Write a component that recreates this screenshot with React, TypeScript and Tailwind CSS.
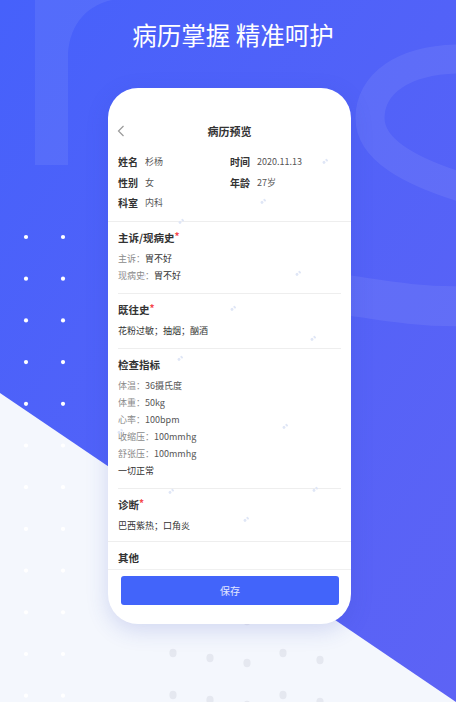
import React from 'react'

const info = [
  { label: '姓名', value: '杉杨' },
  { label: '时间', value: '2020.11.13' },
  { label: '性别', value: '女' },
  { label: '年龄', value: '27岁' },
  { label: '科室', value: '内科' },
]

const checks = [
  { label: '体温：', value: '36摄氏度' },
  { label: '体重：', value: '50kg' },
  { label: '心率：', value: '100bpm' },
  { label: '收缩压：', value: '100mmhg' },
  { label: '舒张压：', value: '100mmhg' },
]

// faint watermark marks inside the card, relative to the card box
const marks = [
  [214, 72], [152, 112], [70, 132], [32, 187], [187, 184], [122, 219], [202, 249],
  [69, 269], [174, 337], [9, 342], [60, 402], [135, 430], [204, 400],
]

const Backdrop: React.FC = () => {
  const rows = Array.from({ length: 12 }, (_, i) => 237 + i * 41.7)
  const grey = [
    [173, 611], [210, 616], [247, 621], [283, 611], [320, 618],
    [173, 653], [210, 658], [247, 663], [283, 653], [320, 660],
    [173, 695], [210, 700], [247, 705], [283, 695], [320, 702],
  ]
  return (
    <svg className="absolute inset-0" width="456" height="702" viewBox="0 0 456 702">
      <g fill="white" opacity="0.07">
        <path d="M35 165 L68 165 L68 58 C68 28 84 6 112 0 L168 0 L171 -6 L35 -6 Z" />
      </g>
      <g stroke="white" fill="none" opacity="0.07">
        <path d="M470 59 C400 57 370 86 370 118 C370 150 410 172 470 190" strokeWidth="29" />
        <path d="M320 291 C380 300 420 308 470 306" strokeWidth="40" />
      </g>
      <polygon points="0,393 456,702 0,702" fill="#f4f7fd" />
      {rows.map((y) => (
        <g key={y} fill="white">
          <circle cx="26" cy={y} r="2.1" />
          <circle cx="63" cy={y} r="2.1" />
        </g>
      ))}
      {grey.map(([x, y]) => (
        <ellipse key={`${x}-${y}`} cx={x} cy={y} rx="3.6" ry="4.2" fill="#e5e8f0" />
      ))}
    </svg>
  )
}

const Star = () => <span className="text-[#f5484c] text-[10px] align-top leading-[12px]">*</span>

const SectionTitle: React.FC<{ text: string; required?: boolean }> = ({ text, required }) => (
  <div className="h-[16px] text-[10.5px] leading-[16px] font-bold text-[#333]">
    {text}
    {required && <Star />}
  </div>
)

export default function App() {
  return (
    <div className="relative w-[456px] h-[702px] overflow-hidden bg-linear-to-br from-[#4661fb] to-[#5d63f5] font-['Noto_Sans_CJK_SC','Noto_Sans',sans-serif]">
      <Backdrop />

      <div className="relative flex flex-col">
        <h1 className="pt-[19px] pl-[10px] text-center text-[24.5px] leading-[32px] text-white">病历掌握 精准呵护</h1>

        <div className="relative mt-[37px] ml-[108px] w-[243px] h-[536px] rounded-[30px] bg-white shadow-[0_6px_22px_rgba(50,70,190,0.18)] overflow-hidden flex flex-col text-[9px]">
          {/* header */}
          <div className="pt-[33px] px-[9px] grid grid-cols-[1fr_auto_1fr] items-center h-[53px]">
            <svg width="8" height="12" viewBox="0 0 8 12" className="text-[#9a9a9a]">
              <polyline points="6.5,1 1.5,6 6.5,11" fill="none" stroke="currentColor" strokeWidth="1.2" />
            </svg>
            <div className="text-[11px] leading-[20px] font-bold text-[#333]">病历预览</div>
            <div />
          </div>

          {/* basic info */}
          <div className="mt-[11px] px-[10px] pb-[7px] border-b border-[#eeeeee] grid grid-cols-[112px_1fr]">
            {info.map((item) => (
              <div key={item.label} className="flex items-center gap-[7px] h-[20.5px]">
                <span className="text-[10px] leading-[14px] font-bold text-[#333]">{item.label}</span>
                <span className="text-[9px] leading-[14px] text-[#555]">{item.value}</span>
              </div>
            ))}
          </div>

          <div className="px-[10px]">
            <div className="pt-[8px] pb-[9px] border-b border-[#eeeeee]">
              <SectionTitle text="主诉/现病史" required />
              <div className="mt-[4px] text-[9px] leading-[17px]">
                <div className="h-[17px]"><span className="text-[#8a8a8a]">主诉：</span><span className="text-[#333]">胃不好</span></div>
                <div className="h-[17px]"><span className="text-[#8a8a8a]">现病史：</span><span className="text-[#333]">胃不好</span></div>
              </div>
            </div>

            <div className="pt-[8px] pb-[9px] border-b border-[#eeeeee]">
              <SectionTitle text="既往史" required />
              <div className="mt-[4px] h-[17px] text-[9px] leading-[17px] text-[#333]">花粉过敏；抽烟；酗酒</div>
            </div>

            <div className="pt-[8px] pb-[9px] border-b border-[#eeeeee]">
              <SectionTitle text="检查指标" />
              <div className="mt-[4px] text-[9px] leading-[17px]">
                {checks.map((c) => (
                  <div key={c.label} className="h-[17px]">
                    <span className="text-[#8a8a8a]">{c.label}</span>
                    <span className="text-[#555]">{c.value}</span>
                  </div>
                ))}
                <div className="h-[17px] text-[#333]">一切正常</div>
              </div>
            </div>
          </div>

          <div className="px-[10px] pt-[8px] pb-[7px] border-b border-[#eeeeee]">
            <SectionTitle text="诊断" required />
            <div className="mt-[4px] h-[17px] text-[9px] leading-[17px] text-[#333]">巴西紫热；口角炎</div>
          </div>

          <div className="px-[10px] pt-[8px] pb-[3px] border-b border-[#f0f0f0]">
            <SectionTitle text="其他" />
          </div>

          <button className="mt-[6px] ml-[13px] w-[218px] h-[29px] shrink-0 rounded-[3px] bg-[#4264fa] text-[10px] text-white/85 flex items-center justify-center">
            保存
          </button>

          {marks.map(([x, y]) => (
            <span
              key={`${x}-${y}`}
              className="absolute flex gap-[1px] -rotate-[40deg] pointer-events-none"
              style={{ left: x, top: y }}
            >
              <span className="w-[2.5px] h-[2.5px] rounded-full bg-[#dfe6f6]" />
              <span className="w-[2.5px] h-[2.5px] rounded-full bg-[#dfe6f6]" />
            </span>
          ))}
        </div>
      </div>
    </div>
  )
}
